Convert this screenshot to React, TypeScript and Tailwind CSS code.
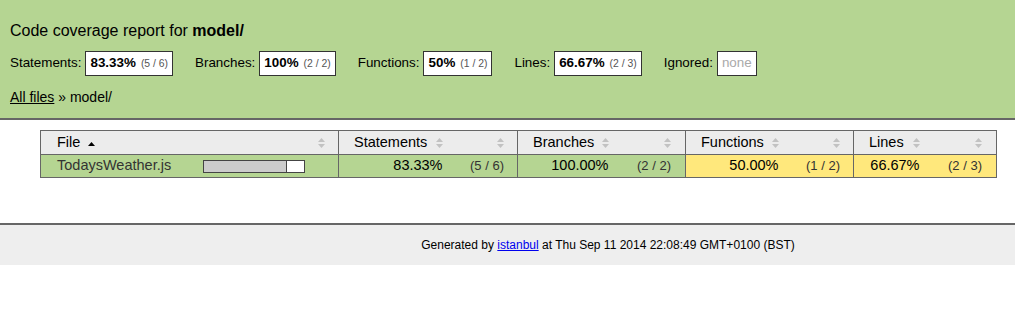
import React from "react";

const font = { fontFamily: '"Liberation Sans", Arial, Helvetica, sans-serif' };

function Sorter() {
  return (
    <svg width="7" height="10" viewBox="0 0 7 10" className="shrink-0">
      <polygon points="0,4 3.5,0 7,4" fill="#c2c2c2" />
      <polygon points="0,6 3.5,10 7,6" fill="#c2c2c2" />
    </svg>
  );
}

function Stat({ label, pct, abs }: { label: string; pct: string; abs?: string }) {
  return (
    <div className="flex items-center mr-[22px]">
      <span className="text-[13.4px] text-black">{label}</span>
      <div className="ml-[4px] h-[25px] flex items-center border border-[#333] bg-white px-[4px]">
        {abs ? (
          <>
            <span className="text-[13.4px] font-bold text-black">{pct}</span>
            <span className="ml-[5px] text-[10.4px] text-[#555]">{abs}</span>
          </>
        ) : (
          <span className="text-[13.4px] text-[#aaa]">{pct}</span>
        )}
      </div>
    </div>
  );
}

const metrics = [
  { name: "Statements", pct: "83.33%", abs: "(5 / 6)", bg: "bg-[#b5d592]" },
  { name: "Branches", pct: "100.00%", abs: "(2 / 2)", bg: "bg-[#b5d592]" },
  { name: "Functions", pct: "50.00%", abs: "(1 / 2)", bg: "bg-[#ffe87c]" },
  { name: "Lines", pct: "66.67%", abs: "(2 / 3)", bg: "bg-[#ffe87c]" },
];

const widths = [150, 148, 104, 75, 91, 77, 93, 75, 66, 77];
const absPad = ["pr-[13px]", "pr-[14px]", "pr-[13px]", "pr-[14px]"];

export default function App() {
  return (
    <div className="w-[1015px] h-[318px] bg-white text-black" style={font}>
      <div className="bg-[#b5d592] border-b-2 border-[#666] h-[120px] px-[10px] pt-[21px]">
        <h1 className="text-[16px] leading-[20px] font-normal">
          Code coverage report for <span className="font-bold">model/</span>
        </h1>
        <div className="mt-[10px] flex items-center">
          <Stat label="Statements:" pct="83.33%" abs="(5 / 6)" />
          <Stat label="Branches:" pct="100%" abs="(2 / 2)" />
          <Stat label="Functions:" pct="50%" abs="(1 / 2)" />
          <Stat label="Lines:" pct="66.67%" abs="(2 / 3)" />
          <Stat label="Ignored:" pct="none" />
        </div>
        <div className="mt-[12px] text-[14px] leading-[18px]">
          <span className="underline">All files</span> » model/
        </div>
      </div>

      <table className="mt-[10px] ml-[40px] w-[956px] table-fixed border-collapse border border-[#666] text-[14.5px]">
        <colgroup>
          {widths.map((w, i) => (
            <col key={i} style={{ width: w }} />
          ))}
        </colgroup>
        <thead>
          <tr className="h-[24px] bg-[#ececec] border-b border-[#666]">
            <th className="font-normal text-left pl-[16px] p-0">
              <div className="flex items-center">
                <span>File</span>
                <svg width="7" height="4" viewBox="0 0 7 4" className="ml-[8px] mt-[2px]">
                  <polygon points="0,4 3.5,0 7,4" fill="#000" />
                </svg>
              </div>
            </th>
            <th className="font-normal p-0 pr-[13px]">
              <div className="flex justify-end">
                <Sorter />
              </div>
            </th>
            {metrics.map((m, i) => (
              <React.Fragment key={m.name}>
                <th className="font-normal text-left p-0 pl-[15px] border-l border-[#666]">
                  <div className="flex items-center justify-between">
                    <span>{m.name}</span>
                    <Sorter />
                  </div>
                </th>
                <th className={`font-normal p-0 ${absPad[i]}`}>
                  <div className="flex justify-end">
                    <Sorter />
                  </div>
                </th>
              </React.Fragment>
            ))}
          </tr>
        </thead>
        <tbody>
          <tr className="h-[23px]">
            <td className="bg-[#b5d592] pl-[16px] p-0 text-[#333] whitespace-nowrap">TodaysWeather.js</td>
            <td className="bg-[#b5d592] p-0 pl-[12px]">
              <div className="flex w-[102px] h-[13px] border border-[#444] bg-white">
                <div className="h-full bg-[#ccc] border-r border-[#444]" style={{ width: "83.33%" }} />
              </div>
            </td>
            {metrics.map((m, i) => (
              <React.Fragment key={m.name}>
                <td className={`${m.bg} p-0 text-right border-l border-[#666]`}>{m.pct}</td>
                <td className={`${m.bg} p-0 text-right text-[13px] text-[#333] ${absPad[i]}`}>{m.abs}</td>
              </React.Fragment>
            ))}
          </tr>
        </tbody>
      </table>

      <div className="mt-[45px] border-t-2 border-[#666] bg-[#eee] h-[42px] flex items-center justify-center pl-[201px] text-[12px]">
        <span>
          Generated by <span className="text-[#00e] underline">istanbul</span> at Thu Sep 11 2014 22:08:49 GMT+0100 (BST)
        </span>
      </div>
    </div>
  );
}
